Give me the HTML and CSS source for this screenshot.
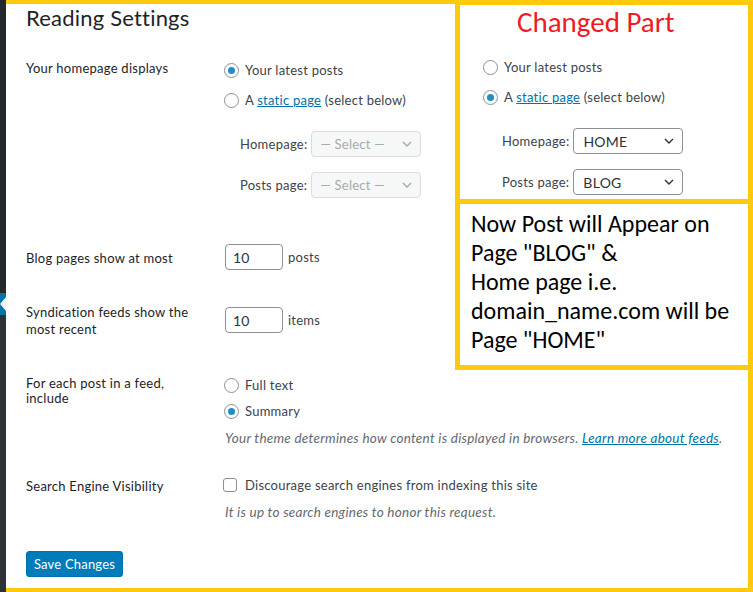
FILE: index.html
```html
<!DOCTYPE html>
<html lang="en">
<head>
<meta charset="utf-8">
<title>Reading Settings</title>
<link rel="stylesheet" href="styles.css">
</head>
<body>
<div class="page">
  <div class="sidebar">
    <div class="sb-top"></div>
    <div class="sb-current"></div>
    <div class="sb-sub"></div>
  </div>
  <main class="main">
    <h1 class="title">Reading Settings</h1>

    <div class="row row-home">
      <div class="label">Your homepage displays</div>
      <div class="field">
        <div class="choices">
          <div class="choice"><span class="radio on"></span><span>Your latest posts</span></div>
          <div class="choice"><span class="radio"></span><span>A <a class="link" href="#">static page</a> (select below)</span></div>
        </div>
        <div class="pickers">
          <div class="picker"><span>Homepage:</span><span class="select disabled">— Select —<svg class="chev" width="10" height="6" viewBox="0 0 10 6"><path d="M1 1l4 4 4-4" fill="none" stroke="currentColor" stroke-width="1.4"/></svg></span></div>
          <div class="picker"><span>Posts page:</span><span class="select disabled">— Select —<svg class="chev" width="10" height="6" viewBox="0 0 10 6"><path d="M1 1l4 4 4-4" fill="none" stroke="currentColor" stroke-width="1.4"/></svg></span></div>
        </div>
      </div>
    </div>

    <div class="row row-blog">
      <div class="label">Blog pages show at most</div>
      <div class="field inline">
        <span class="num">10</span><span>posts</span>
      </div>
    </div>

    <div class="row row-synd">
      <div class="label">Syndication feeds show the most recent</div>
      <div class="field inline">
        <span class="num">10</span><span>items</span>
      </div>
    </div>

    <div class="row row-feed">
      <div class="label tight">For each post in a feed, include</div>
      <div class="field">
        <div class="choices small">
          <div class="choice"><span class="radio"></span><span>Full text</span></div>
          <div class="choice"><span class="radio on"></span><span>Summary</span></div>
        </div>
        <p class="note">Your theme determines how content is displayed in browsers. <a class="link" href="#">Learn more about feeds</a>.</p>
      </div>
    </div>

    <div class="row row-search">
      <div class="label">Search Engine Visibility</div>
      <div class="field">
        <div class="choice check-line"><span class="checkbox"></span><span>Discourage search engines from indexing this site</span></div>
        <p class="note">It is up to search engines to honor this request.</p>
      </div>
    </div>

    <button class="save" type="button">Save Changes</button>
  </main>

  <aside class="annot">
    <div class="annot-top">
      <div class="annot-title">Changed Part</div>
      <div class="choices">
        <div class="choice"><span class="radio"></span><span>Your latest posts</span></div>
        <div class="choice"><span class="radio on"></span><span>A <a class="link" href="#">static page</a> (select below)</span></div>
      </div>
      <div class="pickers">
        <div class="picker"><span>Homepage:</span><span class="select">HOME<svg class="chev" width="10" height="6" viewBox="0 0 10 6"><path d="M1 1l4 4 4-4" fill="none" stroke="currentColor" stroke-width="1.4"/></svg></span></div>
        <div class="picker"><span>Posts page:</span><span class="select">BLOG<svg class="chev" width="10" height="6" viewBox="0 0 10 6"><path d="M1 1l4 4 4-4" fill="none" stroke="currentColor" stroke-width="1.4"/></svg></span></div>
      </div>
    </div>
    <div class="annot-note">Now Post will Appear on<br>Page "BLOG" &amp;<br>Home page i.e.<br>domain_name.com will be<br>Page "HOME"</div>
  </aside>
</div>
</body>
</html>
```

FILE: styles.css
```css
* { box-sizing: border-box; }

html, body {
  margin: 0;
  padding: 0;
  background: #fff;
}

body {
  font-family: Lato, "Open Sans", sans-serif;
  font-size: 13px;
  letter-spacing: 0.25px;
  color: #1d2327;
}

.page {
  position: relative;
  display: flex;
  width: 753px;
  height: 592px;
  overflow: hidden;
}

/* admin sidebar edge */
.sidebar {
  width: 6px;
  flex: none;
  display: flex;
  flex-direction: column;
}
.sb-top {
  height: 293px;
  background: #23282d;
}
.sb-current {
  height: 22px;
  background: #0073aa;
  display: flex;
  align-items: center;
  justify-content: flex-end;
}
.sb-current::after {
  content: "";
  width: 0;
  height: 0;
  border-right: 6px solid #f1f1f1;
  border-top: 7px solid transparent;
  border-bottom: 7px solid transparent;
}
.sb-sub {
  flex: 1;
  background: #2c3338;
}

/* main settings area */
.main {
  flex: 1;
  border-top: 4px solid #ffc90e;
  border-right: 5px solid #ffc90e;
  border-bottom: 4px solid #ffc90e;
  padding-left: 20px;
  background: #fff;
}

.title {
  margin: 0;
  font-weight: 400;
  font-size: 22px;
  line-height: 28px;
  letter-spacing: 0.2px;
  color: #1d2327;
}

.row {
  display: grid;
  grid-template-columns: 199px 1fr;
}
.label {
  line-height: 17px;
  color: #1d2327;
  padding-right: 18px;
}
.label.tight { line-height: 15px; }

.row-home { margin-top: 28px; }
.row-blog { margin-top: 46px; }
.row-blog .label { padding-top: 6px; }
.row-synd { margin-top: 34px; }
.row-synd .field { padding-top: 3px; align-self: start; }
.row-feed { margin-top: 38px; }
.row-search { margin-top: 29px; }
.row-search .label { padding-top: 2px; }

.field { color: #3c434a; }
.field.inline {
  display: flex;
  align-items: center;
  gap: 5px;
  align-self: start;
}

.choices {
  display: flex;
  flex-direction: column;
  gap: 10px;
  color: #3c434a;
}
.choice {
  display: flex;
  align-items: center;
  height: 20px;
  gap: 6px;
  white-space: nowrap;
}
.choices.small { gap: 8px; }
.choices.small .choice { height: 18px; }
.check-line { height: 18px; gap: 8px; margin-left: -2px; }

.radio {
  width: 15px;
  height: 15px;
  flex: none;
  border: 1px solid #8c8f94;
  border-radius: 50%;
  background: #fff;
  display: inline-flex;
  align-items: center;
  justify-content: center;
  margin-left: -1px;
}
.radio.on::after {
  content: "";
  width: 7px;
  height: 7px;
  border-radius: 50%;
  background: #218cc8;
}

.checkbox {
  width: 14px;
  height: 14px;
  flex: none;
  border: 1px solid #8c8f94;
  border-radius: 3px;
  background: #fff;
}

.link {
  color: #0073aa;
  text-decoration: underline;
}

.pickers {
  margin-top: 21px;
  padding-left: 15px;
  display: flex;
  flex-direction: column;
  gap: 15px;
  color: #3c434a;
}
.picker {
  display: flex;
  align-items: center;
  gap: 4px;
  white-space: nowrap;
}
.select {
  width: 110px;
  height: 26px;
  border: 1px solid #8c8f94;
  border-radius: 4px;
  background: #fff;
  display: flex;
  align-items: center;
  justify-content: space-between;
  padding: 0 8px 0 9px;
  font-size: 14px;
  color: #2c3338;
}
.select.disabled {
  background: #f6f7f7;
  border-color: #dcdcde;
  color: #a7aaad;
  font-size: 13px;
  padding-left: 8px;
}
.chev { flex: none; }

.num {
  width: 58px;
  height: 26px;
  border: 1px solid #8c8f94;
  border-radius: 4px;
  background: #fff;
  display: flex;
  align-items: center;
  padding-left: 7px;
  font-size: 14px;
  color: #2c3338;
}

.note {
  margin: 9px 0 0;
  line-height: 18px;
  font-size: 13.5px;
  font-style: italic;
  color: #646970;
  white-space: nowrap;
}

.save {
  display: block;
  margin-top: 30px;
  height: 26px;
  width: 97px;
  padding: 0;
  border: 1px solid #0073aa;
  border-radius: 3px;
  background: #007cba;
  color: #fff;
  font-family: Lato, "Open Sans", sans-serif;
  font-size: 13px;
  letter-spacing: 0.2px;
}

/* annotation overlay */
.annot {
  position: absolute;
  top: 0;
  right: 0;
  width: 298px;
  height: 370px;
  border: 5px solid #ffc90e;
  background: #fff;
  letter-spacing: 0;
}
.annot .choices, .annot .pickers { letter-spacing: 0.25px; }
.annot-top {
  height: 194px;
  padding-left: 24px;
}
.annot-title {
  margin-left: 33px;
  font-family: Carlito, "Open Sans", sans-serif;
  font-size: 29px;
  line-height: 34px;
  color: #ed1c24;
}
.annot-top .choices { margin-top: 18px; }
.annot-top .pickers { margin-top: 21px; padding-left: 18px; }
.annot-note {
  border-top: 5px solid #ffc90e;
  height: 166px;
  padding: 5px 0 0 11px;
  font-family: Carlito, "Open Sans", sans-serif;
  font-size: 24px;
  line-height: 29px;
  color: #000;
  white-space: nowrap;
}
```
